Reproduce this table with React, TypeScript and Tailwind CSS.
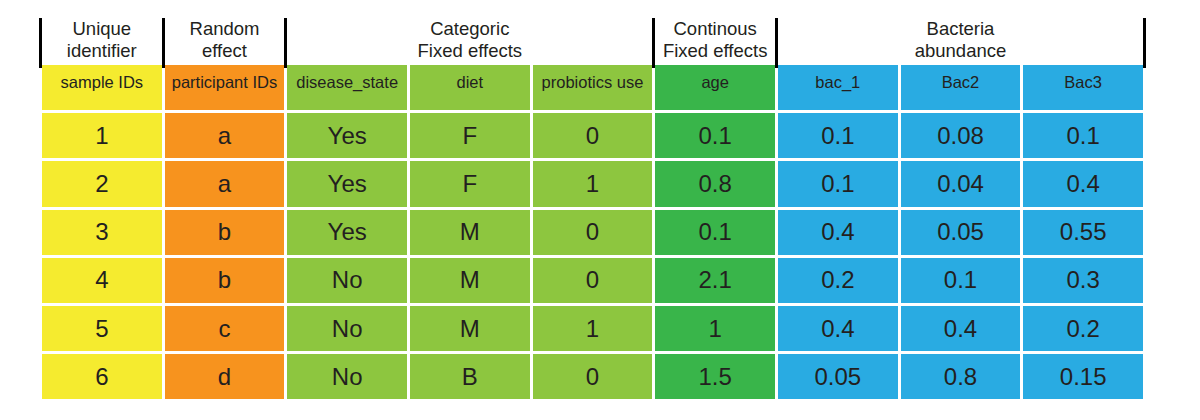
const font = { fontFamily: '"Liberation Sans", Arial, sans-serif' };

const colBg = [
  'bg-[#f5eb2f]',
  'bg-[#f7931e]',
  'bg-[#8dc63f]',
  'bg-[#8dc63f]',
  'bg-[#8dc63f]',
  'bg-[#39b54a]',
  'bg-[#29abe2]',
  'bg-[#29abe2]',
  'bg-[#29abe2]',
];

const labels = [
  'sample IDs',
  'participant IDs',
  'disease_state',
  'diet',
  'probiotics use',
  'age',
  'bac_1',
  'Bac2',
  'Bac3',
];

const rows = [
  ['1', 'a', 'Yes', 'F', '0', '0.1', '0.1', '0.08', '0.1'],
  ['2', 'a', 'Yes', 'F', '1', '0.8', '0.1', '0.04', '0.4'],
  ['3', 'b', 'Yes', 'M', '0', '0.1', '0.4', '0.05', '0.55'],
  ['4', 'b', 'No', 'M', '0', '2.1', '0.2', '0.1', '0.3'],
  ['5', 'c', 'No', 'M', '1', '1', '0.4', '0.4', '0.2'],
  ['6', 'd', 'No', 'B', '0', '1.5', '0.05', '0.8', '0.15'],
];

const groups = [
  { title: ['Unique', 'identifier'], span: 'col-span-1', last: false },
  { title: ['Random', 'effect'], span: 'col-span-1', last: false },
  { title: ['Categoric', 'Fixed effects'], span: 'col-span-3', last: false },
  { title: ['Continous', 'Fixed effects'], span: 'col-span-1', last: false },
  { title: ['Bacteria', 'abundance'], span: 'col-span-3', last: true },
];

export default function App() {
  return (
    <div className="h-[420px] w-[1200px] bg-white text-[#231f20]" style={font}>
      <div className="ml-[42px] w-[1101px] pt-[18px]">
        {/* group headers with black dividers */}
        <div className="grid h-[44px] grid-cols-9 gap-x-[3px]">
          {groups.map((g, i) => (
            <div
              key={i}
              className={`${g.span} -ml-[3px] flex items-center justify-center border-l-[3px] border-black pb-[6px] text-center text-[18.5px] leading-[22px] ${
                g.last ? '-mr-[3px] border-r-[3px]' : ''
              }`}
            >
              <div>
                {g.title[0]}
                <br />
                {g.title[1]}
              </div>
            </div>
          ))}
        </div>

        <div className="mt-[3px] grid grid-cols-9 gap-[3px]">
          {labels.map((l, i) => (
            <div
              key={l}
              className={`${colBg[i]} flex h-[45.2px] items-center justify-center pb-[10px] text-[16.5px]`}
            >
              {l}
            </div>
          ))}
          {rows.map((r, ri) =>
            r.map((v, ci) => (
              <div
                key={`${ri}-${ci}`}
                className={`${colBg[ci]} flex h-[45.2px] items-center justify-center text-[24px]`}
              >
                {v}
              </div>
            )),
          )}
        </div>
      </div>
    </div>
  );
}
